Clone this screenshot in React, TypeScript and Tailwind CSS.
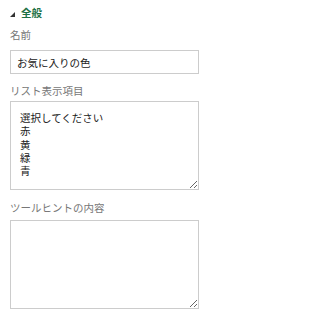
export default function App() {
  return (
    <div className="w-[207px] h-[319px] bg-white pl-[10px] pr-[8px] pt-[6px] font-['Noto_Sans_CJK_JP',sans-serif] text-[10.5px]">
      {/* Section header */}
      <div className="flex items-center gap-[6px] h-[14px]">
        <svg width="5" height="5" viewBox="0 0 5 5" className="mt-[2px]">
          <polygon points="5,0 5,5 0,5" fill="#333" />
        </svg>
        <span className="text-[#1e7145] font-bold leading-[14px]">全般</span>
      </div>

      {/* Name */}
      <div className="mt-[8px] h-[14px] leading-[14px] text-[#777]">名前</div>
      <input
        type="text"
        defaultValue="お気に入りの色"
        className="mt-[8px] block w-full h-[24px] border border-[#ccc] px-[6px] text-[#222] outline-none"
      />

      {/* List items */}
      <div className="mt-[10px] h-[14px] leading-[14px] text-[#777]">リスト表示項目</div>
      <textarea
        defaultValue={"選択してください\n赤\n黄\n緑\n青"}
        className="mt-[3px] block w-full h-[89px] border border-[#ccc] pl-[9px] pt-[9px] leading-[13.3px] text-[#222] outline-none"
      />

      {/* Tooltip */}
      <div className="mt-[11px] h-[14px] leading-[14px] text-[#777]">ツールヒントの内容</div>
      <textarea className="mt-[5px] block w-full h-[89px] border border-[#ccc] outline-none" />
    </div>
  );
}
